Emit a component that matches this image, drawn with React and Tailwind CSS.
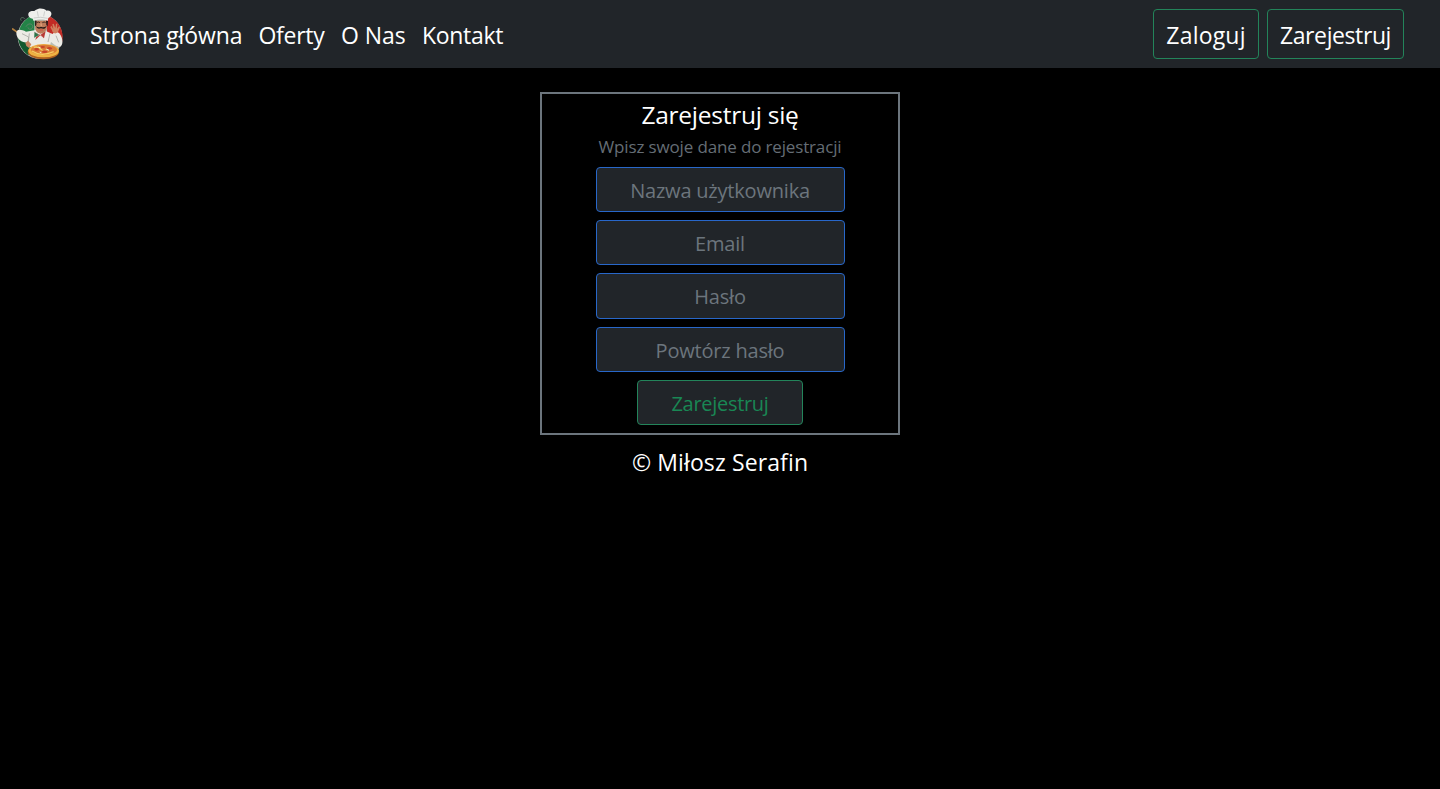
function Logo() {
  return (
    <svg viewBox="36 22 156 156" className="size-[52px] shrink-0" fill="none">
      <circle cx="120" cy="108" r="67" fill="#b9bdb5" />
      <path d="M104 42A68 68 0 0 0 84 163L102 120Z" fill="#238347" />
      <path d="M54 92C50 120 64 150 86 164L88 130Z" fill="#14582f" />
      <path d="M136 43A68 68 0 0 1 186 125L172 138L142 100Z" fill="#c22b25" />
      <path d="M74 54c-8-8-16 0-10 6M78 78c6-12 20-10 20 0s-14 10-14 2" stroke="#64816b" strokeWidth="2.5" />
      <path d="M38 85L58 99" stroke="#b5803d" strokeWidth="5" strokeLinecap="round" />
      <path d="M49 96C50 84 64 86 78 93L108 88L137 91L158 100L166 90L178 98C190 114 190 132 181 138C170 141 159 127 153 124L149 138L86 140L84 126C64 126 49 114 49 96Z" fill="#ecebe5" />
      <path d="M66 99l20 10-2 14M150 98l-6 26M168 105l8 20M88 98l-4 35" stroke="#aaa9a5" strokeWidth="2.5" />
      <path d="M102 93L121 103L137 91L132 113L121 104L106 118L110 103Z" fill="#b93b35" />
      <path d="M103 93L118 103L102 112ZM124 104L135 124" fill="#2b7448" stroke="#e7e4dc" />
      <path d="M107 60L138 60L140 82C138 94 129 99 122 99C110 97 104 86 106 75Z" fill="#bd7c5a" />
      <path d="M105 59L110 61L109 74L105 77ZM138 60L144 60L143 77L139 73Z" fill="#291c1a" />
      <path d="M110 66q5-4 10 0M127 66q6-4 10 0" stroke="#2e211c" strokeWidth="2.5" />
      <path d="M123 68l1 9" stroke="#e1a27b" strokeWidth="4" />
      <path d="M108 76Q115 83 123 78Q132 83 140 75Q136 88 123 83Q111 88 108 76Z" fill="#251817" />
      <path d="M119 88h10" stroke="#d35343" strokeWidth="3" />
      <path d="M101 61L98 54C82 53 80 33 95 31C103 31 104 31 107 28C116 21 132 22 140 30C153 28 159 39 150 49L145 52L143 61C131 55 114 56 101 61Z" fill="#efefec" />
      <path d="M101 52Q121 47 143 53M112 32l3 16M134 32l-3 15" stroke="#b9bcba" strokeWidth="2" />
      <path d="M151 80L154 75L160 85L157 71L161 69L166 82L168 69L172 69L171 84L177 77L180 80L174 94C165 103 157 96 156 89Z" fill="#d0805e" />
      <path d="M76 127L84 120L94 131L88 142L79 136Z" fill="#c9835f" />
      <ellipse cx="130" cy="154" rx="47" ry="22" fill="#ad6020" />
      <ellipse cx="131" cy="150" rx="46" ry="20" fill="#efb242" />
      <ellipse cx="132" cy="147" rx="39" ry="15" fill="#db7c36" />
      <path d="M96 151q16 10 31 10t34-8M101 140q13-4 22 6t32-7" stroke="#f4cf64" strokeWidth="4" />
      <g fill="#c64429">
        <ellipse cx="110" cy="146" rx="7" ry="4" />
        <ellipse cx="128" cy="139" rx="7" ry="3" />
        <ellipse cx="149" cy="143" rx="8" ry="4" />
        <ellipse cx="134" cy="153" rx="8" ry="4" />
      </g>
      <path d="M115 139l7 3M139 145l8 4M119 154l5 2" stroke="#f3e9c6" strokeWidth="3" />
    </svg>
  );
}

const links = [
  { label: 'Strona główna', size: 'w-[152.5px] tracking-[-0.1px]' },
  { label: 'Oferty', size: 'w-[66.5px] tracking-[-0.28px]' },
  { label: 'O Nas', size: 'w-[65px] tracking-[-0.05px]' },
  { label: 'Kontakt', size: 'w-[81px] tracking-[-0.3px]' },
];

const fields = [
  { label: 'Nazwa użytkownika', type: 'text', size: 'h-[45px] mb-2 pt-[1px]' },
  { label: 'Email', type: 'email', size: 'h-[45px] mb-2 pt-[1px]' },
  { label: 'Hasło', type: 'password', size: 'h-[46px] mb-2 pt-[1px]' },
  { label: 'Powtórz hasło', type: 'password', size: 'h-[45px] mb-2 pt-[1px]' },
];

export default function App() {
  return (
    <div className="min-h-screen bg-black font-['Open_Sans','Noto_Sans',sans-serif] text-white">
      <nav className="flex h-[68px] items-center bg-[#212529] pl-3 pr-9 text-[23px] leading-9 tracking-[-0.25px]">
        <Logo />
        <div className="ml-[26px] flex gap-4 pt-[1px]">
          {links.map((link) => (
            <a key={link.label} href="#" className={`${link.size} whitespace-nowrap`}>{link.label}</a>
          ))}
        </div>
        <div className="ml-auto flex gap-2">
          <button className="h-[50px] w-[106px] rounded border border-[#23845a] pt-[1px] tracking-[0.2px]">Zaloguj</button>
          <button className="h-[50px] w-[137px] rounded border border-[#23845a] pt-[1px] tracking-[-0.4px]">Zarejestruj</button>
        </div>
      </nav>

      <main className="flex flex-col items-center pt-6">
        <form className="flex h-[343px] w-[360px] flex-col items-center border-2 border-[#6c757d] pt-[4px]">
          <h1 className="h-[34px] text-[24.5px] leading-[33px] tracking-[-0.25px]">Zarejestruj się</h1>
          <p className="h-[35px] text-[17px] leading-[29px] tracking-[-0.15px] text-[#656d75]">Wpisz swoje dane do rejestracji</p>
          {fields.map((field) => (
            <input
              key={field.label}
              type={field.type}
              placeholder={field.label}
              className={`${field.size} w-[249px] shrink-0 rounded border border-[#2867c9] bg-[#212529] text-center text-[20px] tracking-[-0.2px] placeholder:text-[#6c757d]`}
            />
          ))}
          <button type="button" className="h-[45px] w-[166px] shrink-0 rounded border border-[#23845a] bg-[#212529] pt-[2px] text-[20px] tracking-[-0.3px] text-[#198754]">Zarejestruj</button>
        </form>
        <footer className="pt-[9px] text-[23px] leading-9 tracking-[0.12px]">© Miłosz Serafin</footer>
      </main>
    </div>
  );
}
